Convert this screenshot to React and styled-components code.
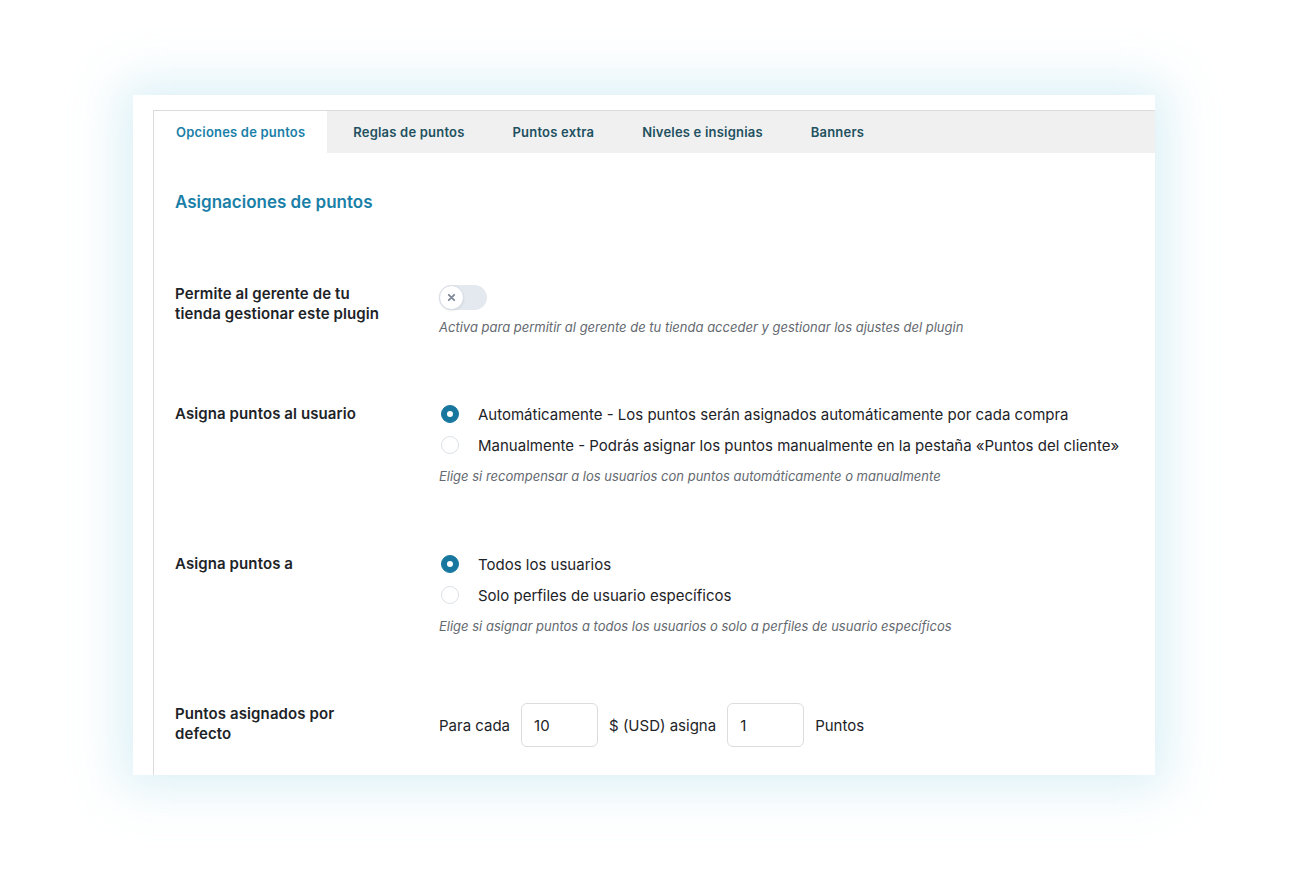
import React, { useState } from "react";
import styled, { createGlobalStyle } from "styled-components";

const GlobalStyle = createGlobalStyle`
  body {
    margin: 0;
    background: #ffffff;
    font-family: Inter, "Noto Sans", "Liberation Sans", sans-serif;
    color: #1d2327;
  }
`;

const Page = styled.div`
  padding: 95px 0 0 133px;
  height: 873px;
  box-sizing: border-box;
`;

const Card = styled.div`
  width: 1022px;
  height: 680px;
  background: #fff;
  box-shadow: 0 0 45px 12px rgba(175, 222, 238, 0.45);
  padding: 15px 0 0 20px;
  box-sizing: border-box;
  overflow: hidden;
`;

const Panel = styled.div`
  height: 100%;
  border-left: 1px solid #dcdcde;
  border-top: 1px solid #dcdcde;
`;

const TabBar = styled.div`
  display: flex;
  height: 42px;
  background: #f0f0f0;
`;

const Tab = styled.div`
  display: flex;
  align-items: center;
  padding: 0 22px;
  margin-right: 4px;
  font-size: 13px;
  font-weight: 600;
  letter-spacing: 0.2px;
  color: ${({ active }) => (active ? "#1a7fa8" : "#22505f")};
  background: ${({ active }) => (active ? "#fff" : "transparent")};
`;

const Content = styled.div`
  padding: 37px 0 0 21px;
`;

const Heading = styled.h2`
  margin: 0 0 71px;
  font-size: 17px;
  line-height: 24px;
  font-weight: 600;
  color: #1a7fa8;
`;

const Rows = styled.div`
  display: flex;
  flex-direction: column;
  gap: 67px;
`;

const Row = styled.div`
  display: grid;
  grid-template-columns: 264px 1fr;
  align-items: start;
`;

const Label = styled.div`
  width: 210px;
  font-size: 15px;
  line-height: 20px;
  font-weight: 600;
  letter-spacing: 0.1px;
  margin-top: ${({ offset }) => offset || 0}px;
`;

const Control = styled.div`
  display: flex;
  flex-direction: column;
`;

const Desc = styled.div`
  margin-top: ${({ gap }) => gap}px;
  font-size: 13px;
  line-height: ${({ tall }) => (tall ? 20 : 18)}px;
  font-style: italic;
  color: #646970;
`;

const Toggle = styled.div`
  position: relative;
  width: 48px;
  height: 25px;
  border-radius: 13px;
  background: #e4e9f0;
`;

const Knob = styled.div`
  position: absolute;
  left: 0;
  top: 0;
  width: 25px;
  height: 25px;
  border-radius: 50%;
  background: #fff;
  box-sizing: border-box;
  border: 1px solid #d6dce5;
  box-shadow: 0 1px 2px rgba(0, 0, 0, 0.08);
  display: flex;
  align-items: center;
  justify-content: center;
`;

const Options = styled.div`
  display: flex;
  flex-direction: column;
  gap: 9px;
`;

const Option = styled.label`
  display: flex;
  align-items: center;
  gap: 19px;
  height: 22px;
  font-size: 15px;
  color: #1d2327;
  padding-left: 2px;
`;

const Radio = styled.span`
  width: 18px;
  height: 18px;
  border-radius: 50%;
  box-sizing: border-box;
  flex-shrink: 0;
  display: flex;
  align-items: center;
  justify-content: center;
  background: ${({ checked }) => (checked ? "#18779f" : "#fff")};
  border: 1px solid ${({ checked }) => (checked ? "#18779f" : "#dde1e6")};
  &::after {
    content: "";
    width: 6px;
    height: 6px;
    border-radius: 50%;
    background: #fff;
    display: ${({ checked }) => (checked ? "block" : "none")};
  }
`;

const Inline = styled.div`
  display: flex;
  align-items: center;
  gap: 11px;
  font-size: 15px;
`;

const NumberInput = styled.input`
  width: 77px;
  height: 44px;
  box-sizing: border-box;
  border: 1px solid #dcdcde;
  border-radius: 6px;
  padding: 0 12px;
  font-family: inherit;
  font-size: 15px;
  color: #1d2327;
  outline: none;
`;

const tabs = [
  "Opciones de puntos",
  "Reglas de puntos",
  "Puntos extra",
  "Niveles e insignias",
  "Banners",
];

const RadioGroup = ({ options, value, onChange }) => (
  <Options>
    {options.map((opt, i) => (
      <Option key={i} onClick={() => onChange(i)}>
        <Radio checked={value === i} />
        {opt}
      </Option>
    ))}
  </Options>
);

export default function App() {
  const [assignMode, setAssignMode] = useState(0);
  const [assignTo, setAssignTo] = useState(0);

  return (
    <>
      <GlobalStyle />
      <Page>
        <Card>
          <Panel>
            <TabBar>
              {tabs.map((t, i) => (
                <Tab key={t} active={i === 0}>
                  {t}
                </Tab>
              ))}
            </TabBar>
            <Content>
              <Heading>Asignaciones de puntos</Heading>
              <Rows>
                <Row>
                  <Label offset={-1}>Permite al gerente de tu tienda gestionar este plugin</Label>
                  <Control>
                    <Toggle>
                      <Knob>
                        <svg width="9" height="9" viewBox="0 0 10 10">
                          <path d="M2 2 L8 8 M8 2 L2 8" stroke="#7d8798" strokeWidth="2" strokeLinecap="round" />
                        </svg>
                      </Knob>
                    </Toggle>
                    <Desc gap={8}>
                      Activa para permitir al gerente de tu tienda acceder y gestionar los ajustes del plugin
                    </Desc>
                  </Control>
                </Row>
                <Row>
                  <Label offset={1}>Asigna puntos al usuario</Label>
                  <Control>
                    <RadioGroup
                      value={assignMode}
                      onChange={setAssignMode}
                      options={[
                        "Automáticamente - Los puntos serán asignados automáticamente por cada compra",
                        "Manualmente - Podrás asignar los puntos manualmente en la pestaña «Puntos del cliente»",
                      ]}
                    />
                    <Desc gap={10} tall>
                      Elige si recompensar a los usuarios con puntos automáticamente o manualmente
                    </Desc>
                  </Control>
                </Row>
                <Row>
                  <Label offset={1}>Asigna puntos a</Label>
                  <Control>
                    <RadioGroup
                      value={assignTo}
                      onChange={setAssignTo}
                      options={["Todos los usuarios", "Solo perfiles de usuario específicos"]}
                    />
                    <Desc gap={10} tall>
                      Elige si asignar puntos a todos los usuarios o solo a perfiles de usuario específicos
                    </Desc>
                  </Control>
                </Row>
                <Row>
                  <Label offset={1}>Puntos asignados por defecto</Label>
                  <Inline>
                    Para cada
                    <NumberInput defaultValue="10" />
                    $ (USD) asigna
                    <NumberInput defaultValue="1" />
                    Puntos
                  </Inline>
                </Row>
              </Rows>
            </Content>
          </Panel>
        </Card>
      </Page>
    </>
  );
}
